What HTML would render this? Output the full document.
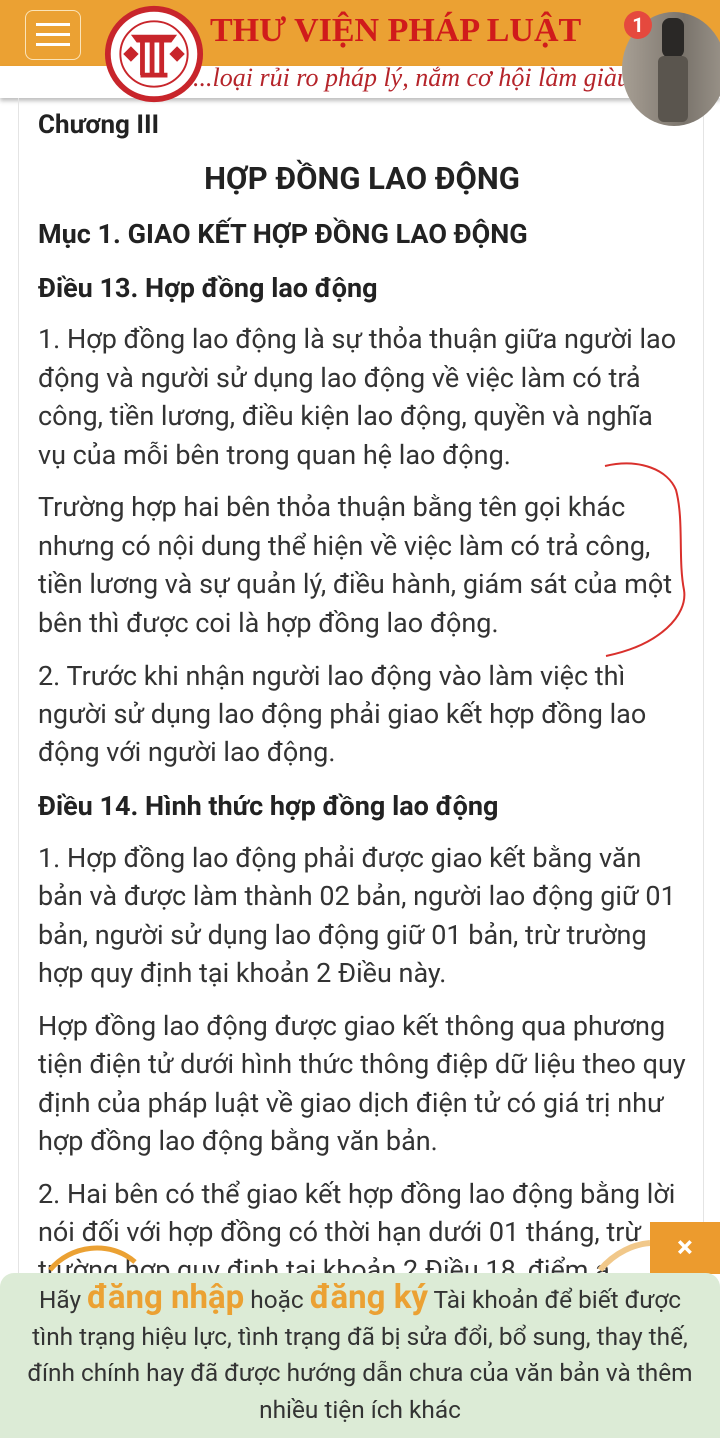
<!DOCTYPE html>
<html><head><meta charset="utf-8">
<style>
body{margin:0;width:720px;height:1438px;overflow:hidden;background:#fff;font-family:"Roboto","Liberation Sans",sans-serif;position:relative;color:#222}
.hd{position:absolute;left:0;top:0;width:720px;height:66px;background:#eba133}
.sub{position:absolute;left:0;top:66px;width:720px;height:32px;background:#fff;box-shadow:0 3px 4px rgba(0,0,0,.25)}
.card{position:absolute;left:18px;top:98px;width:684px;height:1340px;border-left:1px solid #e4e4e4;border-right:1px solid #e4e4e4}
.l{position:absolute;left:38px;white-space:nowrap;font-size:27px;line-height:30px;color:#333}
.b{font-weight:bold;font-size:27px;color:#222}
</style></head><body>
<div class="hd"></div>
<div class="sub"></div>
<div class="card"></div>
<div style="position:absolute;left:25px;top:10px;width:56px;height:50px;border:1.5px solid #fbe4b8;border-radius:8px;box-sizing:border-box"></div>
<div style="position:absolute;left:36px;top:23px;width:34px;height:3px;background:#fff"></div>
<div style="position:absolute;left:36px;top:33px;width:34px;height:3px;background:#fff"></div>
<div style="position:absolute;left:36px;top:43px;width:34px;height:3px;background:#fff"></div>
<svg style="position:absolute;left:104px;top:4px" width="100" height="100" viewBox="0 0 104 100">
<ellipse cx="52" cy="50" rx="48" ry="47" fill="#fff" stroke="#c8252b" stroke-width="6"/>
<ellipse cx="52" cy="50" rx="35" ry="34" fill="#fff" stroke="#c8252b" stroke-width="2"/>
<path d="M28 30 H76 L70 38 H34 Z" fill="#c8252b"/>
<path d="M40 38 V72 M50 38 V72 M60 38 V72 M38 72 H66" stroke="#c8252b" stroke-width="5"/>
<path d="M20 50 l8-8 8 8-8 8z M68 50 l8-8 8 8-8 8z" fill="#c8252b"/>
</svg>
<div style="position:absolute;left:210px;top:12px;font-family:'Liberation Serif',serif;font-weight:bold;font-size:34px;color:#d01b1b;white-space:nowrap">THƯ VIỆN PHÁP LUẬT</div>
<div style="position:absolute;left:193px;top:63px;font-family:'Liberation Serif',serif;font-style:italic;font-size:26px;color:#b5242a;white-space:nowrap">...loại rủi ro pháp lý, nắm cơ hội làm giàu</div>
<div style="position:absolute;left:622px;top:12px;width:104px;height:114px;border-radius:50%;background:linear-gradient(90deg,#a79f94,#8a837a 40%,#7a746c 60%,#9b948a);overflow:hidden">
<div style="position:absolute;left:40px;top:6px;width:22px;height:40px;background:#2a2826;border-radius:8px"></div>
<div style="position:absolute;left:36px;top:44px;width:30px;height:66px;background:#5a554e;border-radius:6px"></div></div>
<div style="position:absolute;left:624px;top:11px;width:28px;height:28px;border-radius:50%;background:#e5493e;color:#fff;font-size:20px;font-weight:bold;text-align:center;line-height:28px">1</div>

<div class="l b" style="top:110px;font-size:26px">Chương III</div>
<div class="l b" style="top:164px;left:0;width:724px;text-align:center;font-size:31px">HỢP ĐỒNG LAO ĐỘNG</div>
<div class="l b" style="top:219px">Mục 1. GIAO KẾT HỢP ĐỒNG LAO ĐỘNG</div>
<div class="l b" style="top:273px">Điều 13. Hợp đồng lao động</div>
<div class="l" style="top:324px">1. Hợp đồng lao động là sự thỏa thuận giữa người lao</div>
<div class="l" style="top:363px">động và người sử dụng lao động về việc làm có trả</div>
<div class="l" style="top:401px">công, tiền lương, điều kiện lao động, quyền và nghĩa</div>
<div class="l" style="top:440px">vụ của mỗi bên trong quan hệ lao động.</div>
<div class="l" style="top:492px">Trường hợp hai bên thỏa thuận bằng tên gọi khác</div>
<div class="l" style="top:531px">nhưng có nội dung thể hiện về việc làm có trả công,</div>
<div class="l" style="top:569px">tiền lương và sự quản lý, điều hành, giám sát của một</div>
<div class="l" style="top:608px">bên thì được coi là hợp đồng lao động.</div>
<div class="l" style="top:661px">2. Trước khi nhận người lao động vào làm việc thì</div>
<div class="l" style="top:699px">người sử dụng lao động phải giao kết hợp đồng lao</div>
<div class="l" style="top:737px">động với người lao động.</div>
<div class="l b" style="top:791px">Điều 14. Hình thức hợp đồng lao động</div>
<div class="l" style="top:843px">1. Hợp đồng lao động phải được giao kết bằng văn</div>
<div class="l" style="top:881px">bản và được làm thành 02 bản, người lao động giữ 01</div>
<div class="l" style="top:920px">bản, người sử dụng lao động giữ 01 bản, trừ trường</div>
<div class="l" style="top:958px">hợp quy định tại khoản 2 Điều này.</div>
<div class="l" style="top:1011px">Hợp đồng lao động được giao kết thông qua phương</div>
<div class="l" style="top:1049px">tiện điện tử dưới hình thức thông điệp dữ liệu theo quy</div>
<div class="l" style="top:1088px">định của pháp luật về giao dịch điện tử có giá trị như</div>
<div class="l" style="top:1126px">hợp đồng lao động bằng văn bản.</div>
<div class="l" style="top:1179px">2. Hai bên có thể giao kết hợp đồng lao động bằng lời</div>
<div class="l" style="top:1217px">nói đối với hợp đồng có thời hạn dưới 01 tháng, trừ</div>
<div class="l" style="top:1255px">trường hợp quy định tại khoản 2 Điều 18, điểm a</div>

<svg style="position:absolute;left:0;top:0" width="720" height="1438">
<path d="M605 466 C640 458 668 470 676 490 C684 520 678 560 684 590 C688 615 660 645 606 656" fill="none" stroke="#d9302c" stroke-width="2"/>
<path d="M50 1270 C70 1245 110 1240 135 1262" fill="none" stroke="#eba133" stroke-width="5"/>
<path d="M600 1270 C615 1252 635 1244 650 1243" fill="none" stroke="#f1c88a" stroke-width="6"/>
</svg>

<div style="position:absolute;left:650px;top:1222px;width:70px;height:52px;background:#ec9b2e;color:#fff;font-size:30px;font-weight:bold;text-align:center;line-height:52px">×</div>
<div style="position:absolute;left:0;top:1273px;width:720px;height:165px;background:#dcebd6;border-radius:14px 14px 0 0;text-align:center;color:#333;font-size:24.4px;line-height:36.5px;padding-top:9px;box-sizing:border-box;white-space:nowrap">
Hãy <b style="color:#eba133;font-size:33px;line-height:20px">đăng nhập</b> hoặc <b style="color:#eba133;font-size:33px;line-height:20px">đăng ký</b> Tài khoản để biết được<br>
tình trạng hiệu lực, tình trạng đã bị sửa đổi, bổ sung, thay thế,<br>
đính chính hay đã được hướng dẫn chưa của văn bản và thêm<br>
nhiều tiện ích khác</div>
</body></html>
